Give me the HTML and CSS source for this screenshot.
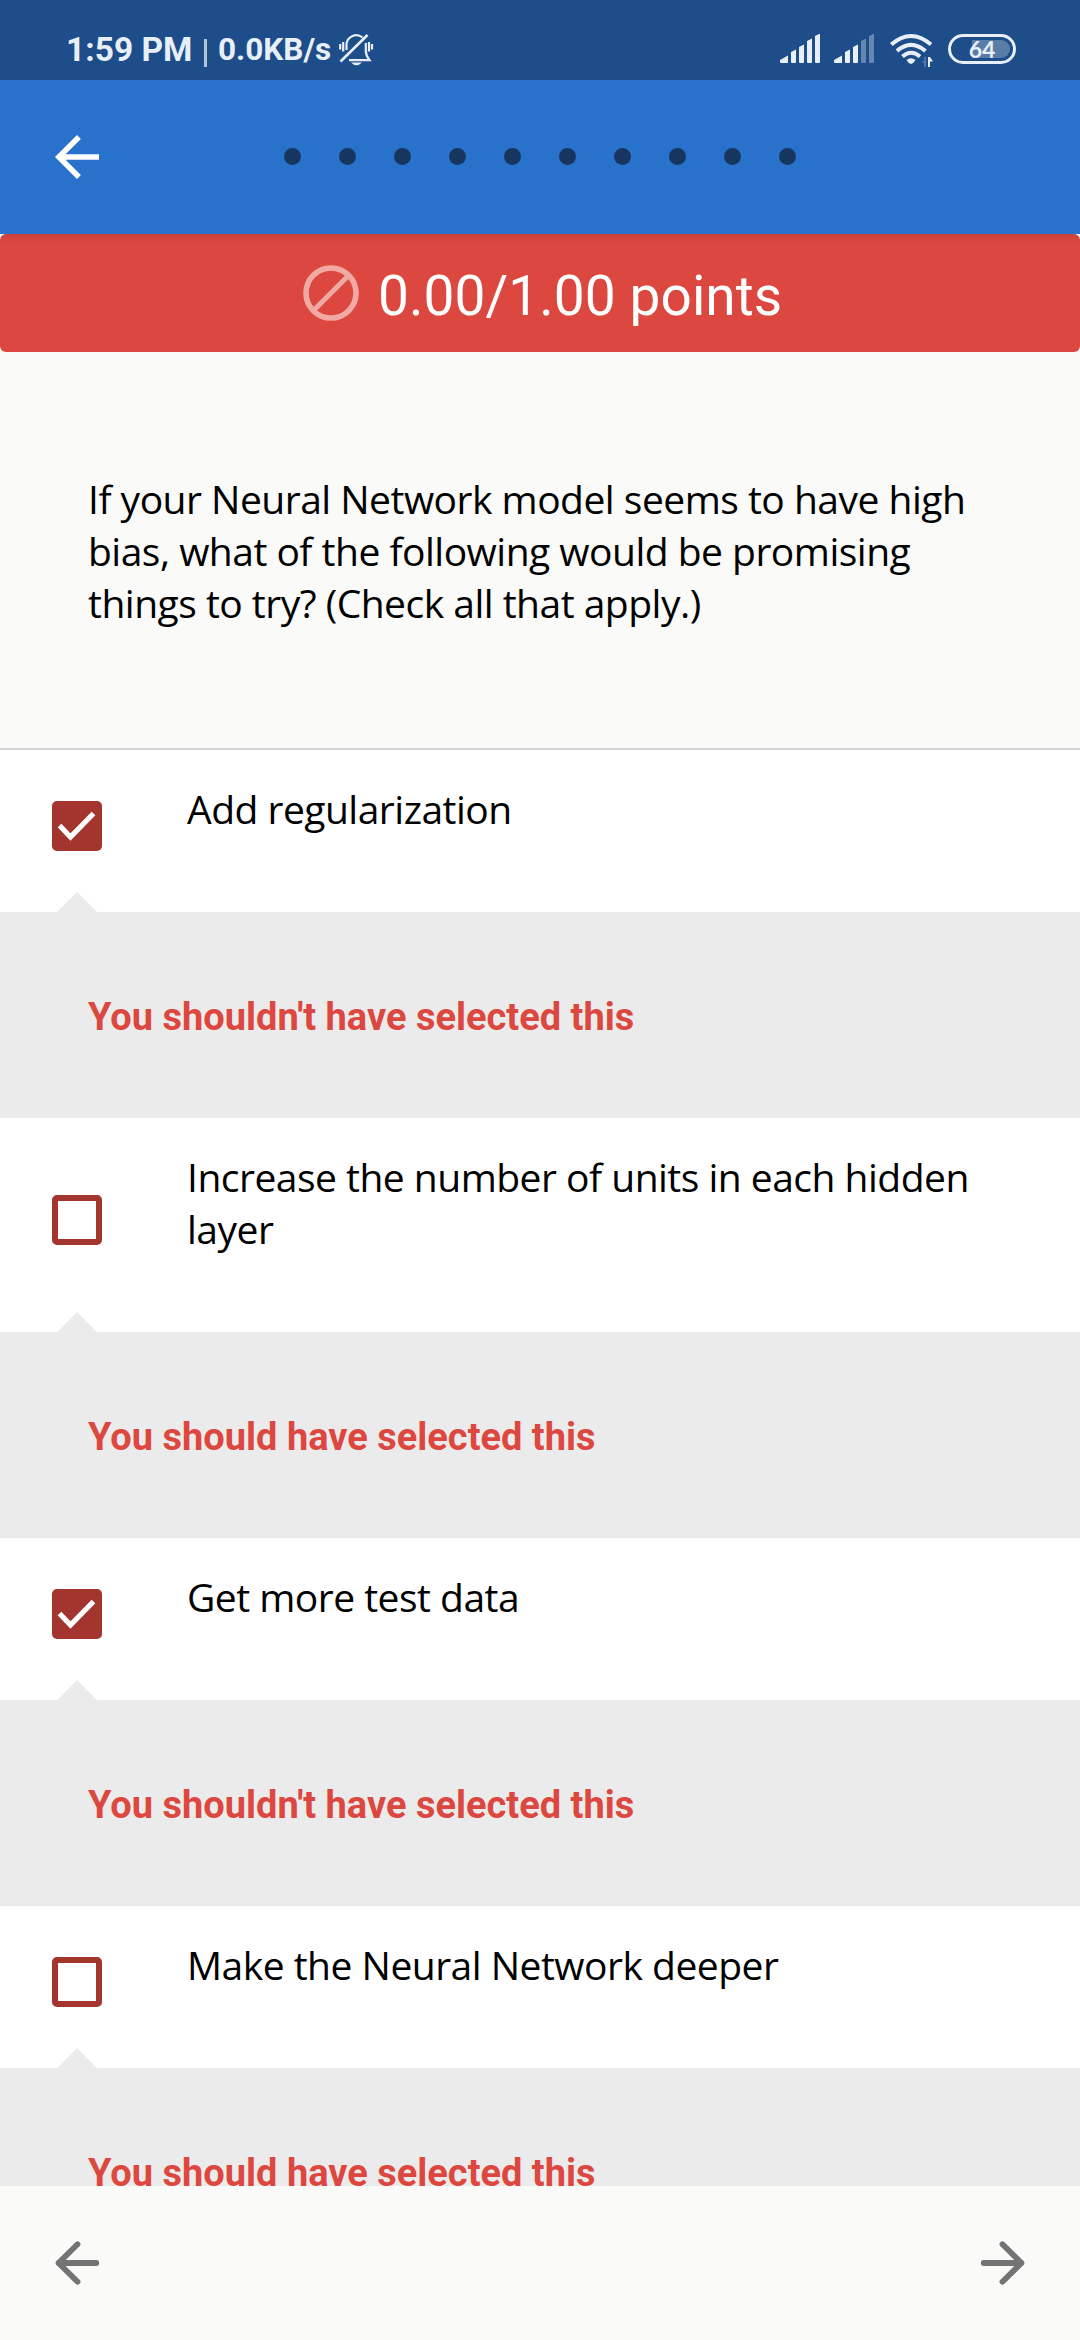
FILE: index.html
```html
<!DOCTYPE html>
<html lang="en">
<head>
<meta charset="utf-8">
<title>Quiz</title>
<link rel="stylesheet" href="styles.css">
</head>
<body>
<div class="screen">
  <div class="status">
    <span class="clock">1:59 PM</span><span class="sep"></span><span class="speed">0.0KB/s</span>
    <svg class="bell" width="36" height="34" viewBox="0 0 36 34" fill="none" stroke="#e8eff8" stroke-width="2.2">
      <path d="M7.500 17V12A9.800 9.800 0 0 1 23.500 4.500M26.800 10V18C26.800 22 28 24 30.500 27.200H10M4.200 9v9.500M1.200 11v5.500M30 9v9.500M33 11v5.500"/>
      <path d="M1.500 28.500L28.500 2" stroke-width="2.600"/><path d="M12 29.500h11q-5.500 5.500 -11 0z" fill="#e8eff8" stroke="none"/>
    </svg>
    <span class="spacer"></span>
    <svg class="signal" width="42" height="30" viewBox="0 0 42 30" fill="#e8eff8">
      <path d="M1 26L9 21.500v7.500H2a1 1 0 0 1-1-1zM12 18l5-2.500V28a1 1 0 0 1-1 1h-3a1 1 0 0 1-1-1zM20 13l5-2.500V28a1 1 0 0 1-1 1h-3a1 1 0 0 1-1-1zM28 7l5-2.500V28a1 1 0 0 1-1 1h-3a1 1 0 0 1-1-1zM36 2l5-2.500V28a1 1 0 0 1-1 1h-3a1 1 0 0 1-1-1z"/>
    </svg>
    <svg class="signal" width="42" height="30" viewBox="0 0 42 30" fill="#e8eff8">
      <path d="M1 26L9 21.500v7.500H2a1 1 0 0 1-1-1zM12 18l5-2.500V28a1 1 0 0 1-1 1h-3a1 1 0 0 1-1-1zM20 13l5-2.500V28a1 1 0 0 1-1 1h-3a1 1 0 0 1-1-1z"/>
      <path fill="#6687b2" d="M28 7l5-2.500V28a1 1 0 0 1-1 1h-3a1 1 0 0 1-1-1zM36 2l5-2.500V28a1 1 0 0 1-1 1h-3a1 1 0 0 1-1-1z"/>
    </svg>
    <svg class="wifi" width="44" height="36" viewBox="0 0 44 36" fill="none" stroke="#e8eff8" stroke-width="4">
      <path d="M2.300 11.500Q22 -5.500 42 11.500M8 18Q22 5.800 36.500 18M13.500 23.500Q22 16 31 23.500"/>
      <path fill="#e8eff8" stroke="none" d="M17.500 27Q22 23.500 26.500 27Q24.500 30.500 22 31Q19.500 30.500 17.500 27z"/>
      <path stroke="none" fill="#5478a8" d="M37 24v10h-1.800v-3.500l-2.500-2.500h2.500v-4z"/>
      <path stroke="none" fill="#e8eff8" d="M39 24h2l3 4.500h-3V34h-2z"/>
    </svg>
    <span class="battery"><span class="charge"></span><span class="level">64</span></span>
  </div>
  <header class="topbar">
    <svg class="back" width="66" height="66" viewBox="0 0 24 24" fill="#fff"><path d="M20 11H7.830l5.590-5.590L12 4l-8 8 8 8 1.410-1.410L7.830 13H20v-2z"/></svg>
    <div class="dots"><i></i><i></i><i></i><i></i><i></i><i></i><i></i><i></i><i></i><i></i></div>
  </header>
  <main class="content">
    <div class="score">
      <svg class="block" width="56" height="56" viewBox="0 0 56 56" fill="none" stroke="#f1a9a3" stroke-width="5.600"><circle cx="28" cy="28" r="25"/><path d="M11 45L45 11" stroke-width="5"/></svg>
      <span class="points">0.00/1.00 points</span>
    </div>
    <p class="question">If your Neural Network model seems to have high<br>bias, what of the following would be promising<br>things to try? (Check all that apply.)</p>
    <div class="option">
      <svg class="box" width="50" height="50" viewBox="0 0 50 50"><rect width="50" height="50" rx="5" fill="#a3342e"/><path d="M7.500 24.500L18.500 36L41.500 12.500" fill="none" stroke="#fff" stroke-width="5.200"/></svg>
      <span class="label">Add regularization</span>
    </div>
    <div class="feedback">You shouldn't have selected this</div>
    <div class="option">
      <span class="box empty"></span>
      <span class="label">Increase the number of units in each hidden<br>layer</span>
    </div>
    <div class="feedback">You should have selected this</div>
    <div class="option">
      <svg class="box" width="50" height="50" viewBox="0 0 50 50"><rect width="50" height="50" rx="5" fill="#a3342e"/><path d="M7.500 24.500L18.500 36L41.500 12.500" fill="none" stroke="#fff" stroke-width="5.200"/></svg>
      <span class="label">Get more test data</span>
    </div>
    <div class="feedback">You shouldn't have selected this</div>
    <div class="option">
      <span class="box empty"></span>
      <span class="label">Make the Neural Network deeper</span>
    </div>
    <div class="feedback">You should have selected this</div>
  </main>
  <footer class="nav">
    <svg width="66" height="66" viewBox="0 0 24 24" fill="none" stroke="#737373" stroke-width="2.100" stroke-linecap="round" stroke-linejoin="round"><path d="M19 12H5.300M12.200 5.200L5.300 12l6.900 6.800"/></svg>
    <svg width="66" height="66" viewBox="0 0 24 24" fill="none" stroke="#737373" stroke-width="2.100" stroke-linecap="round" stroke-linejoin="round"><path d="M5 12h13.700M11.800 5.200L18.700 12l-6.900 6.800"/></svg>
  </footer>
</div>
</body>
</html>
```
FILE: styles.css
```css
* { box-sizing: border-box; }
body { margin: 0; background: #fafaf8; }
.screen {
  width: 1080px;
  height: 2340px;
  display: flex;
  flex-direction: column;
  overflow: hidden;
  font-family: Roboto, sans-serif;
}
.status {
  height: 80px;
  flex: none;
  display: flex;
  align-items: flex-start;
  background: #1d4e89;
  color: #e8eff8;
  padding: 0 64px 0 66px;
  white-space: nowrap;
}
.clock { width: 128px; margin-top: 30px; font-size: 33.5px; line-height: 40px; font-weight: 700; }
.sep { width: 3px; height: 28px; margin: 39px 11px 0 10px; background: #b4c5da; }
.speed { width: 115px; margin-top: 30px; font-size: 31.5px; line-height: 40px; font-weight: 700; }
.bell { margin: 33px 0 0 6px; }
.spacer { flex: 1; }
.signal { margin: 34px 12px 0 0; }
.wifi { margin: 33px 15px 0 2px; }
.battery {
  position: relative;
  width: 68px;
  height: 30px;
  margin-top: 34px;
  border: 3px solid #e8eff8;
  border-radius: 15px;
}
.charge {
  position: absolute;
  left: 21px;
  top: 3px;
  width: 38px;
  height: 18px;
  border-radius: 0 9px 9px 0;
  background: #5a7da8;
}
.level {
  position: absolute;
  left: 0;
  right: 0;
  top: 0;
  text-align: center;
  font: 700 23px/25px Lato, sans-serif;
}
.topbar {
  height: 154px;
  flex: none;
  display: flex;
  align-items: center;
  background: #2972cc;
  padding: 0 0 0 44px;
}
.dots { display: flex; gap: 38px; margin: -1px 0 0 174px; }
.dots i { width: 17px; height: 17px; border-radius: 50%; background: #16365f; }
.content { flex: 1; min-height: 0; overflow: hidden; }
.score {
  height: 118px;
  display: flex;
  align-items: flex-start;
  border-radius: 6px;
  background: linear-gradient(#c8423a, #d6463e 5px, #dc483f 14px);
  padding-left: 303px;
}
.block { margin-top: 31px; }
.points { margin: 29px 0 0 19px; font-size: 55px; line-height: 66px; letter-spacing: 0.07px; color: #fff; white-space: nowrap; }
.question {
  margin: 0;
  height: 398px;
  padding: 121px 0 0 88px;
  border-bottom: 2px solid #d3d4d4;
  font: 39px/52px "Open Sans", sans-serif;
  letter-spacing: -0.51px;
  color: #000;
  white-space: nowrap;
}
.option {
  display: flex;
  align-items: center;
  background: #fff;
  padding: 33px 0 43px 52px;
}
.label {
  margin-left: 85px;
  padding-bottom: 34px;
  font: 39px/52px "Open Sans", sans-serif;
  letter-spacing: -0.51px;
  color: #000;
  white-space: nowrap;
}
.box { width: 50px; height: 50px; flex: none; }
.empty { border: 6px solid #a3342e; border-radius: 5px; }
.feedback {
  position: relative;
  height: 206px;
  background: #ebebeb;
  padding: 79px 0 0 88px;
  font-size: 38px;
  line-height: 52px;
  font-weight: 700;
  color: #dc483f;
  white-space: nowrap;
}
.feedback::before {
  content: "";
  position: absolute;
  left: 57px;
  top: -20px;
  border: 20px solid transparent;
  border-top: 0;
  border-bottom-color: #ebebeb;
}
.nav {
  height: 154px;
  flex: none;
  display: flex;
  justify-content: space-between;
  align-items: center;
  background: #fafaf8;
  padding: 0 44px;
}
```
